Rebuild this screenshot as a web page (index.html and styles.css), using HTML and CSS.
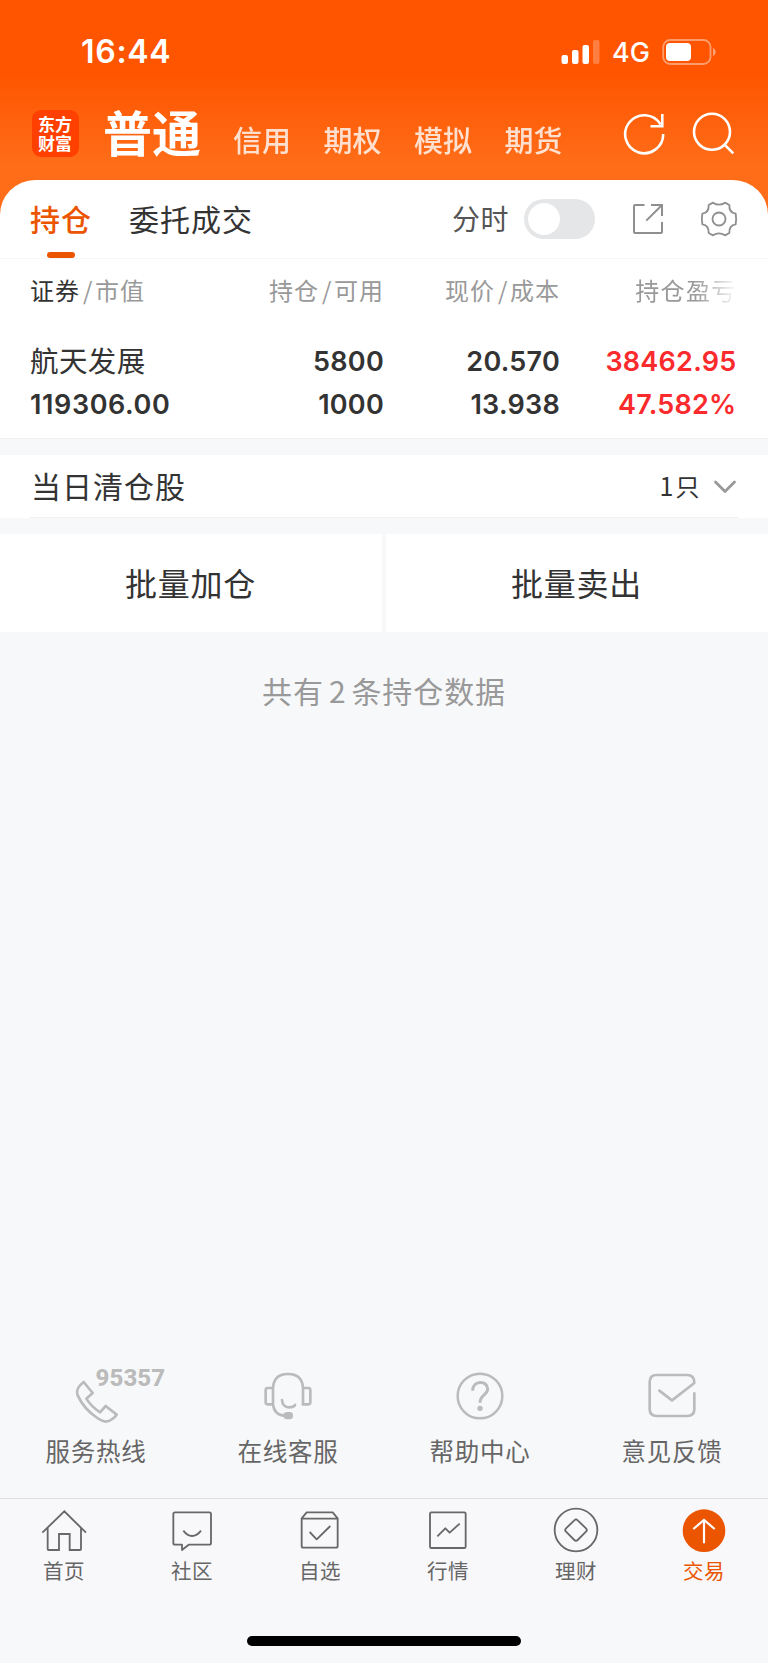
FILE: index.html
```html
<!DOCTYPE html>
<html lang="zh-CN">
<head>
<meta charset="utf-8">
<title>交易 - 持仓</title>
<link rel="stylesheet" href="styles.css">
</head>
<body>
<div class="app">
  <header class="hero">
    <div class="status">
      <span class="clock">16:44</span>
      <div class="status-right">
        <svg class="signal" width="40" height="26" viewBox="0 0 40 26" fill="#fff"><rect x="0.5" y="16" width="6.5" height="9" rx="2"/><rect x="11" y="11" width="6.5" height="14" rx="2"/><rect x="21.5" y="6" width="6.5" height="19" rx="2"/><rect x="32" y="1" width="6.5" height="24" rx="2" opacity=".25"/></svg>
        <span class="network">4G</span>
        <svg class="battery" width="56" height="26" viewBox="0 0 56 26"><rect x="1.2" y="1" width="47.3" height="24" rx="7" fill="none" stroke="#fff" stroke-opacity=".42" stroke-width="1.8"/><rect x="4" y="4" width="25" height="18" rx="4" fill="#fff"/><path d="M51 9c3.5 1.500 3.500 6.500 0 8z" fill="#fff" fill-opacity=".45"/></svg>
      </div>
    </div>
    <nav class="accounts">
      <div class="logo"><span>东方财富</span></div>
      <h1 class="current">普通</h1>
      <div class="others"><span>信用</span><span>期权</span><span>模拟</span><span>期货</span></div>
      <svg class="refresh" width="44" height="44" viewBox="0 0 44 44" fill="none" stroke="#fff" stroke-width="2.600"><path d="M41.2 23A19 19 0 1 1 38.500 13.500"/><path d="M40.300 3V15.200H28.500"/></svg>
      <svg class="search" width="44" height="44" viewBox="0 0 44 44" fill="none" stroke="#fff" stroke-width="2.600"><circle cx="21" cy="19.800" r="18"/><path d="M33.300 32.300L42.300 41.300"/></svg>
    </nav>
  </header>

  <main class="sheet">
    <div class="tabs">
      <span class="tab active">持仓</span>
      <span class="tab">委托成交</span>
      <span class="minute">分时</span>
      <span class="toggle"></span>
      <svg class="export" width="32" height="32" viewBox="0 0 32 32" fill="none" stroke="#8f8f8f" stroke-width="2"><path d="M12.500 2H3Q2 2 2 3V29Q2 30 3 30H29Q30 30 30 29V19M19 2H30V13M30 2L14.300 17.600"/></svg>
      <svg class="gear" width="38" height="38" viewBox="946 90 114 114" fill="none" stroke="#8f8f8f" stroke-width="5.500" stroke-linejoin="round"><path d="M985 98Q1003 110 1021 98L1034 105C1033 123 1040 129 1053 131Q1056 147 1053 163C1040 165 1033 171 1034 189L1021 196Q1003 184 985 196L972 189C973 171 966 165 953 163Q950 147 953 131C966 129 973 123 972 105Z"/><circle cx="1003" cy="147" r="19.500"/></svg>
    </div>

    <div class="grid head">
      <span class="c1"><b class="dark">证券</b><i>/</i>市值</span>
      <span>持仓<i>/</i>可用</span>
      <span>现价<i>/</i>成本</span>
      <span class="fade">持仓盈亏</span>
    </div>
    <div class="holding">
      <div class="grid row">
        <span class="c1 name">航天发展</span><span>5800</span><span>20.570</span><span class="up">38462.95</span>
      </div>
      <div class="grid row">
        <span class="c1 value">119306.00</span><span>1000</span><span>13.938</span><span class="up">47.582%</span>
      </div>
    </div>
  </main>

  <section class="cleared">
    <div class="cleared-row">
      <span class="cleared-title">当日清仓股</span>
      <span class="count"><em>1</em>只</span>
      <svg class="chevron" width="24" height="16" viewBox="0 0 24 16" fill="none" stroke="#999" stroke-width="2.800" stroke-linecap="round" stroke-linejoin="round"><path d="M2.500 3L12 12.500L21.500 3"/></svg>
    </div>
  </section>
  <section class="batch"><button>批量加仓</button><button>批量卖出</button></section>
  <p class="total">共有<em>2</em>条持仓数据</p>

  <section class="services">
    <div class="service">
      <div class="hotline">
        <svg width="48" height="48" viewBox="222 88 144 144" fill="none" stroke="#bbb" stroke-width="8" stroke-linejoin="round"><path d="M251 97L278 130L259 147Q274 171 300 188L317 169L350 195Q347 201 337 208C321 220 309 217 292 205C265 187 244 161 233 137C227 120 236 109 251 97Z"/></svg>
        <span class="number">95357</span>
      </div>
      <span>服务热线</span>
    </div>
    <div class="service">
      <svg width="50" height="50" viewBox="790 64 150 150" fill="none" stroke="#bbb" stroke-width="8"><path d="M820 164V119Q820 73 865 73Q910 73 910 119V164H926Q932 164 932 158V121Q932 115 926 115H910M820 115H804Q798 115 798 121V158Q798 164 804 164H820Q824 196 855 198"/><path d="M847 151Q849 173 868 173Q882 173 886 166" stroke-linecap="round"/><rect x="852" y="187" width="28" height="22" rx="10" fill="#bbb" stroke="none"/></svg>
      <span>在线客服</span>
    </div>
    <div class="service">
      <svg width="50" height="50" viewBox="214 63 150 150" fill="none" stroke="#bbb" stroke-width="7.500"><circle cx="289" cy="138" r="67"/><path d="M267 122C267 90 312 90 312 117C312 136 289 134 289 158" stroke-width="9"/><circle cx="289" cy="175" r="8" fill="#bbb" stroke="none"/></svg>
      <span>帮助中心</span>
    </div>
    <div class="service">
      <svg width="50" height="50" viewBox="789 64 150 150" fill="none" stroke="#bbb" stroke-width="8" stroke-linecap="round" stroke-linejoin="round"><path d="M931 131V178Q931 199 910 199H818Q797 199 797 178V97Q797 76 818 76H910Q931 76 931 100L864 152L826 123"/></svg>
      <span>意见反馈</span>
    </div>
  </section>

  <nav class="tabbar">
    <div class="item"><svg width="46" height="46" viewBox="123 470 138 138" fill="none" stroke="#686868" stroke-width="5.500"><path d="M127 547L193 483L258 547M143 533V596Q143 599 146 599H177V551H209V599H240Q243 599 243 596V533"/></svg><span>首页</span></div>
    <div class="item"><svg width="46" height="46" viewBox="507 470 138 138" fill="none" stroke="#686868" stroke-width="5.500" stroke-linejoin="round"><path d="M525 486H628Q633 486 633 491V578Q633 583 628 583H566L546 599V583H525Q520 583 520 578V491Q520 486 525 486Z"/><path d="M550 541Q562 557 576 557Q591 557 603 541"/></svg><span>社区</span></div>
    <div class="item"><svg width="46" height="46" viewBox="891 470 138 138" fill="none" stroke="#686868" stroke-width="5.500" stroke-linejoin="round"><path d="M905 504L920 486H998L1013 504V587Q1013 592 1008 592H910Q905 592 905 587ZM905 505H1013M929 545L950 567L991 527"/></svg><span>自选</span></div>
    <div class="item"><svg width="46" height="46" viewBox="123 470 138 138" fill="none" stroke="#686868" stroke-width="5.500" stroke-linejoin="round"><rect x="138" y="486" width="107" height="107" rx="4"/><path d="M160 558L184 534L197 547L227 520"/></svg><span>行情</span></div>
    <div class="item"><svg width="46" height="46" viewBox="507 470 138 138" fill="none" stroke="#686868" stroke-width="5.500" stroke-linejoin="round"><circle cx="576" cy="539" r="64"/><path d="M571 510Q576 504 581 510L606 534Q611 539 606 544L581 569Q576 574 571 569L546 544Q541 539 546 534Z"/></svg><span>理财</span></div>
    <div class="item on"><svg width="46" height="46" viewBox="892 470 138 138" fill="none" stroke="#fff" stroke-width="6.500"><circle cx="961" cy="541" r="64" fill="#eb5500" stroke="none"/><path d="M961 579V510M929 536L961 509L993 536"/></svg><span>交易</span></div>
  </nav>
  <div class="home"></div>
</div>
</body>
</html>
```
FILE: styles.css
```css
* { box-sizing: border-box; }
body { margin: 0; background: #f7f8fa; }
.app {
  display: flex; flex-direction: column;
  width: 768px; height: 1663px; overflow: hidden;
  font-family: "Noto Sans CJK SC", sans-serif; color: #333;
  white-space: nowrap;
}
svg { display: block; flex: none; }
em, i { font-style: normal; }

.hero { height: 230px; flex: none; background: linear-gradient(#ff5500 0, #ff5500 75px, #ff6d19 165px, #ff6d19 100%); color: #fff; }
.status { display: flex; justify-content: space-between; align-items: center; height: 103px; padding: 0 50px 0 81px; font-family: Inter, sans-serif; }
.clock { font-size: 32px; font-weight: 600; line-height: 40px; letter-spacing: .7px; }
.status-right { display: flex; align-items: center; }
.network { font-size: 27px; font-weight: 500; margin: 2px 12px 0 11px; line-height: 30px; }
.accounts { display: flex; height: 60px; padding-left: 32px; }
.logo { width: 47px; height: 47px; margin-top: 7px; padding: 3.500px 6px; border-radius: 9px; background: #ff4000; font-size: 17px; font-weight: 700; line-height: 19.500px; white-space: normal; }
.logo span { display: block; width: 35px; word-break: break-all; }
.current { margin: 0 0 0 24px; width: 98px; font-size: 49px; font-weight: 700; line-height: 56px; }
.others { display: flex; width: 364px; margin-left: 32px; padding-top: 16px; gap: 32.500px; font-size: 29px; font-weight: 500; line-height: 40px; opacity: .8; }
.refresh { margin: 8px 0 0 25px; }
.search { margin: 9px 0 0 25px; }

.sheet { margin-top: -50.500px; height: 259.500px; flex: none; background: #fff; border-radius: 35px 35px 0 0; border-bottom: 1px solid #f0f0f0; }
.tabs { display: flex; height: 79px; padding: 0 30px; border-bottom: 1.500px solid #f5f6f7; line-height: 76px; font-size: 30px; letter-spacing: 1px; }
.tab { margin-right: 37px; }
.tab.active { color: #eb5500; font-weight: 500; display: flex; flex-direction: column; align-items: center; }
.tab.active::after { content: ""; width: 28px; height: 6px; margin-top: -4px; border-radius: 3px; background: #eb5500; }
.minute { margin-left: auto; font-size: 28px; letter-spacing: .5px; color: #555; }
.toggle { width: 71px; height: 40px; margin: 19.500px 0 0 15px; padding: 4px; border-radius: 20px; background: #e5e6e8; }
.toggle::before { content: ""; display: block; width: 32px; height: 32px; border-radius: 50%; background: #fff; }
.export { margin: 23px 0 0 37px; }
.gear { margin: 20.500px 0 0 36px; }

.grid { display: grid; grid-template-columns: 170px 184px 176px 176.500px; padding-left: 30px; text-align: right; }
.c1 { text-align: left; }
.head { height: 66px; line-height: 61px; font-size: 24px; letter-spacing: 1px; color: #999; }
.head b { font-weight: 400; color: #333; }
.head i { margin: 0 1.500px 0 3px; }
.head .fade { letter-spacing: 1.300px; -webkit-mask-image: linear-gradient(90deg, #000 76%, transparent 101%); mask-image: linear-gradient(90deg, #000 76%, transparent 101%); }
.holding { padding-top: 15.500px; }
.row { font: 600 27px/43px Inter, sans-serif; letter-spacing: .25px; height: 42.500px; }
.row .name { font: 400 28.500px/40px "Noto Sans CJK SC", sans-serif; letter-spacing: .4px; }
.row .value { letter-spacing: .6px; }
.up { color: #fa2a2d; }

.cleared { margin-top: 16px; height: 63px; flex: none; background: #fff; padding: 0 30px; }
.cleared-row { display: flex; align-items: center; height: 63px; border-bottom: 1.500px solid #f0f0f0; font-size: 30px; letter-spacing: 1px; }
.count { margin: -3px 12px 0 auto; font-size: 24px; }
.count em { margin-right: 1px; font-size: 25px; }
.chevron { margin: 2px 1.500px 0 0; }
.cleared-title { line-height: 60px; margin: -2px 0 0 1px; }
.batch { display: flex; gap: 4px; margin-top: 16px; height: 98px; flex: none; }
.batch button { flex: 1; border: 0; padding: 0 1px 2px 0; background: #fff; color: #333; font: 400 32px/96px "Noto Sans CJK SC", sans-serif; letter-spacing: .8px; }
.total { margin: 36px 0 0; text-align: center; font-size: 30px; line-height: 44px; letter-spacing: .9px; color: #999; }
.total em { margin: 0 5px; }

.services { display: grid; grid-template-columns: repeat(4, 192px); margin-top: auto; height: 127px; flex: none; font-size: 24.500px; line-height: 36px; letter-spacing: .7px; color: #666; }
.service { display: flex; flex-direction: column; align-items: center; gap: 12px; }
.hotline { display: flex; height: 50px; width: 96px; padding-top: 8px; margin-left: 6px; }
.hotline svg { margin-left: 23px; }
.number { margin: -15px 0 0 -26.500px; font: 800 24px/28px Roboto, sans-serif; color: #bbb; letter-spacing: .1px; }
.tabbar { display: grid; grid-template-columns: repeat(6, 128px); height: 100px; flex: none; padding-top: 8px; border-top: 1px solid #dddee0; background: #f8f8fa; font-size: 20.500px; line-height: 30px; letter-spacing: .5px; color: #666; }
.item { display: flex; flex-direction: column; align-items: center; gap: 2px; }
.on { color: #eb5500; }
.home { width: 274px; height: 10px; flex: none; margin: 38px auto 17px; border-radius: 5px; background: #000; }
```
